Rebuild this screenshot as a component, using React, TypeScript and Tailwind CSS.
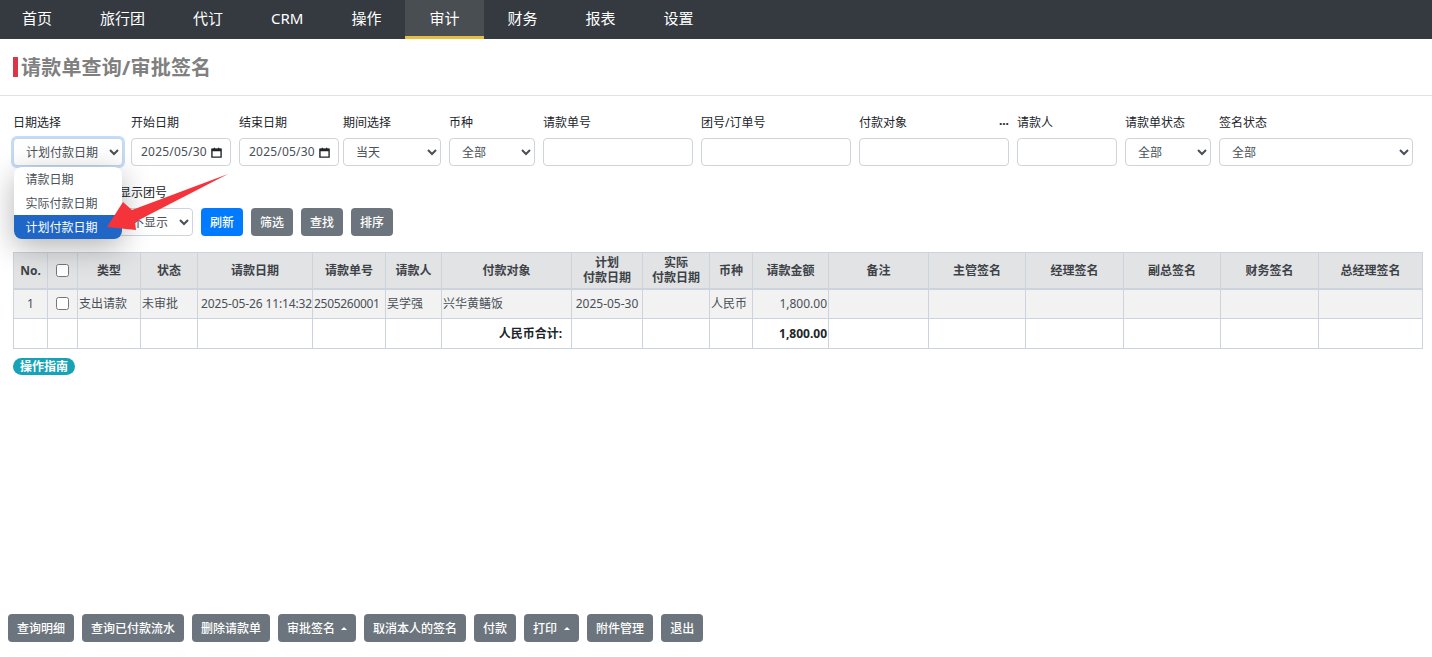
const font = "font-['Noto_Sans','Noto_Sans_CJK_SC',sans-serif]";

const navItems = ["首页", "旅行团", "代订", "CRM", "操作", "审计", "财务", "报表", "设置"];

const columns = [
  { label: "No.", width: 34 },
  { label: "", width: 30 },
  { label: "类型", width: 63 },
  { label: "状态", width: 57 },
  { label: "请款日期", width: 115 },
  { label: "请款单号", width: 73 },
  { label: "请款人", width: 56 },
  { label: "付款对象", width: 130 },
  { label: "计划\n付款日期", width: 71 },
  { label: "实际\n付款日期", width: 67 },
  { label: "币种", width: 43 },
  { label: "请款金额", width: 76 },
  { label: "备注", width: 100 },
  { label: "主管签名", width: 97 },
  { label: "经理签名", width: 98 },
  { label: "副总签名", width: 97 },
  { label: "财务签名", width: 98 },
  { label: "总经理签名", width: 104 },
];

const footerButtons = [
  { label: "查询明细" },
  { label: "查询已付款流水" },
  { label: "删除请款单" },
  { label: "审批签名", caret: true },
  { label: "取消本人的签名" },
  { label: "付款" },
  { label: "打印", caret: true, wide: true },
  { label: "附件管理" },
  { label: "退出" },
];

const fieldBox = "h-7 rounded border border-[#ced4da] bg-white text-xs text-[#495057]";
const selectBox = `${fieldBox} pl-2 outline-none ${font}`;

function Field({
  label,
  className,
  labelClassName = "",
  children,
}: {
  label: string;
  className: string;
  labelClassName?: string;
  children: React.ReactNode;
}) {
  return (
    <div className={`flex shrink-0 flex-col gap-2 ${className}`}>
      <label className={`h-[17px] truncate text-xs leading-[19px] text-[#212529] ${labelClassName}`}>{label}</label>
      {children}
    </div>
  );
}

function DateField({ label, value }: { label: string; value: string }) {
  return (
    <Field label={label} className="w-[100px]">
      <div className={`${fieldBox} flex items-center justify-between pl-[9px] pr-2`}>
        <span className="tracking-[0.2px]">{value}</span>
        <svg width="11" height="11" viewBox="0 0 12 12" className="shrink-0">
          <path d="M1 2.5h10v8.5H1z" fill="none" stroke="#212529" strokeWidth="1.5" />
          <path d="M1 2h10v2.5H1zM3 .8h1.4v2H3zM7.6.8H9v2H7.6z" fill="#212529" />
        </svg>
      </div>
    </Field>
  );
}

function GrayButton({ label, caret, wide }: { label: string; caret?: boolean; wide?: boolean }) {
  return (
    <button type="button" className="flex h-7 items-center rounded bg-[#6c757d] px-[9px] text-xs font-medium text-white">
      <span className="pt-px">{label}</span>
      {caret ? (
        <span className={`h-0 w-0 border-x-[3px] border-b-[3px] border-x-transparent border-b-white ${wide ? "ml-[7px]" : "ml-1.5"}`} />
      ) : null}
    </button>
  );
}

export default function App() {
  const cell = "border border-[#ccd3dc] p-0 text-xs";
  const bodyCell = `${cell} pt-px`;

  return (
    <div className={`flex h-[657px] w-[1432px] flex-col overflow-hidden bg-white text-[#212529] ${font}`}>
      <nav className="flex h-[39px] shrink-0 bg-[#343a40]">
        <div className="-ml-0.5 flex">
          {navItems.map((item) => (
            <a
              key={item}
              className={`flex h-[39px] items-center border-b-[3px] px-6 pt-px text-[15px] font-normal ${
                item === "审计" ? "border-[#e8bf3c] bg-[#494e53] text-white" : "border-transparent text-white"
              }`}
            >
              {item}
            </a>
          ))}
        </div>
      </nav>

      <div className="flex h-[57px] shrink-0 items-center border-b border-[#dee2e6] pb-[1px] pl-[13px]">
        <span className="h-5 w-[5px] bg-[#dc3545]" />
        <h1 className="ml-[3px] pt-[3px] text-xl font-bold tracking-[0.2px] text-[#808080]">请款单查询/审批签名</h1>
      </div>

      <div className="relative px-[13px] pt-[17px]">
        <div className="flex gap-2">
          <Field label="日期选择" className="w-[110px]">
            <select defaultValue="计划付款日期" className={`${selectBox} border-[#80bdff] shadow-[0_0_0_2px_rgba(0,123,255,0.25)]`}>
              <option>请款日期</option>
              <option>实际付款日期</option>
              <option>计划付款日期</option>
            </select>
          </Field>
          <DateField label="开始日期" value="2025/05/30" />
          <DateField label="结束日期" value="2025/05/30" />
          <Field label="期间选择" className="-ml-1 w-[98px]">
            <select className={`${selectBox} w-full`}>
              <option>当天</option>
            </select>
          </Field>
          <Field label="币种" className="w-[86px]">
            <select className={`${selectBox} w-full`}>
              <option>全部</option>
            </select>
          </Field>
          <Field label="请款单号" className="w-[150px]">
            <input className={fieldBox} />
          </Field>
          <Field label="团号/订单号" className="w-[150px]">
            <input className={fieldBox} />
          </Field>
          <Field label="付款对象" className="relative w-[150px]">
            <span className="absolute right-0 top-0 text-xs font-bold">...</span>
            <input className={fieldBox} />
          </Field>
          <Field label="请款人" className="w-[100px]">
            <input className={fieldBox} />
          </Field>
          <Field label="请款单状态" className="w-[86px]">
            <select className={`${selectBox} w-full`}>
              <option>全部</option>
            </select>
          </Field>
          <Field label="签名状态" className="w-[194px]">
            <select className={`${selectBox} w-full`}>
              <option>全部</option>
            </select>
          </Field>
        </div>

        <div className="mt-[17px] flex items-end gap-2">
          <Field label="" className="w-[92px]">
            <div className="h-7" />
          </Field>
          <Field label="显示团号" className="w-[80px]" labelClassName="pl-1.5">
            <select className={`${selectBox} w-full pl-3.5`}>
              <option>不显示</option>
            </select>
          </Field>
          <button type="button" className="h-7 w-[42px] rounded bg-[#007bff] pt-px text-xs font-medium text-white">
            刷新
          </button>
          <GrayButton label="筛选" />
          <GrayButton label="查找" />
          <GrayButton label="排序" />
        </div>

        {/* open list of the date select */}
        <ul className="absolute left-[14px] top-[71px] w-[108px] overflow-hidden rounded-lg bg-white text-xs text-[#495057] shadow-[0_8px_30px_rgba(0,0,0,0.3)]">
          <li className="flex h-6 items-center pl-[11.5px] pt-px">请款日期</li>
          <li className="flex h-6 items-center pl-[11.5px] pt-px">实际付款日期</li>
          <li className="flex h-6 items-center bg-[#1f66c6] pl-[11.5px] pt-px text-white">计划付款日期</li>
        </ul>

        {/* annotation arrow */}
        <svg width="130" height="62" viewBox="0 0 130 62" className="absolute left-[102px] top-[78px]">
          <path d="M126 0 L30 36 L21 28 L5 53 L34 56 L33 48 Z" fill="#f5333a" />
        </svg>
      </div>

      <div className="mt-4 px-[13px]">
        <table className="w-[1409px] table-fixed border-collapse">
          <colgroup>
            {columns.map((c, i) => (
              <col key={i} style={{ width: c.width }} />
            ))}
          </colgroup>
          <thead>
            <tr className="h-9 bg-[#e2e3e5]">
              {columns.map((c, i) => (
                <th key={i} className={`${cell} border-b-2 text-center font-bold leading-[15px] whitespace-pre-line text-[#3d4247]`}>
                  {i === 1 ? <input type="checkbox" className="mt-1 h-[13px] w-[13px]" /> : c.label}
                </th>
              ))}
            </tr>
          </thead>
          <tbody>
            <tr className="h-[30px] bg-[#f2f2f2] text-[#495057]">
              <td className={`${bodyCell} text-center`}>1</td>
              <td className={`${bodyCell} text-center`}>
                <input type="checkbox" className="mt-[3px] h-[13px] w-[13px]" />
              </td>
              <td className={`${bodyCell} pl-px`}>支出请款</td>
              <td className={`${bodyCell} pl-px`}>未审批</td>
              <td className={`${bodyCell} pl-[3px] whitespace-nowrap tracking-[-0.12px]`}>2025-05-26 11:14:32</td>
              <td className={`${bodyCell} pl-px tracking-[-0.3px]`}>2505260001</td>
              <td className={`${bodyCell} pl-px`}>吴学强</td>
              <td className={`${bodyCell} pl-px`}>兴华黄鳝饭</td>
              <td className={`${bodyCell} text-center`}>2025-05-30</td>
              <td className={cell} />
              <td className={`${bodyCell} pl-px`}>人民币</td>
              <td className={`${bodyCell} pr-px text-right`}>1,800.00</td>
              {columns.slice(12).map((c) => (
                <td key={c.label} className={cell} />
              ))}
            </tr>
            <tr className="h-[30px]">
              {columns.slice(0, 7).map((c, i) => (
                <td key={i} className={cell} />
              ))}
              <td className={`${bodyCell} pr-[9px] text-right font-bold`}>人民币合计:</td>
              {columns.slice(8, 11).map((c) => (
                <td key={c.label} className={cell} />
              ))}
              <td className={`${bodyCell} pr-px text-right font-bold`}>1,800.00</td>
              {columns.slice(12).map((c) => (
                <td key={c.label} className={cell} />
              ))}
            </tr>
          </tbody>
        </table>

        <span className="mt-[9px] flex h-[17px] w-[62px] items-center justify-center rounded-full bg-[#17a2b8] text-xs font-bold text-white">
          操作指南
        </span>
      </div>

      <div className="mt-auto mb-[15px] flex gap-2 pl-2">
        {footerButtons.map((b) => (
          <GrayButton key={b.label} label={b.label} caret={b.caret} wide={b.wide} />
        ))}
      </div>
    </div>
  );
}
